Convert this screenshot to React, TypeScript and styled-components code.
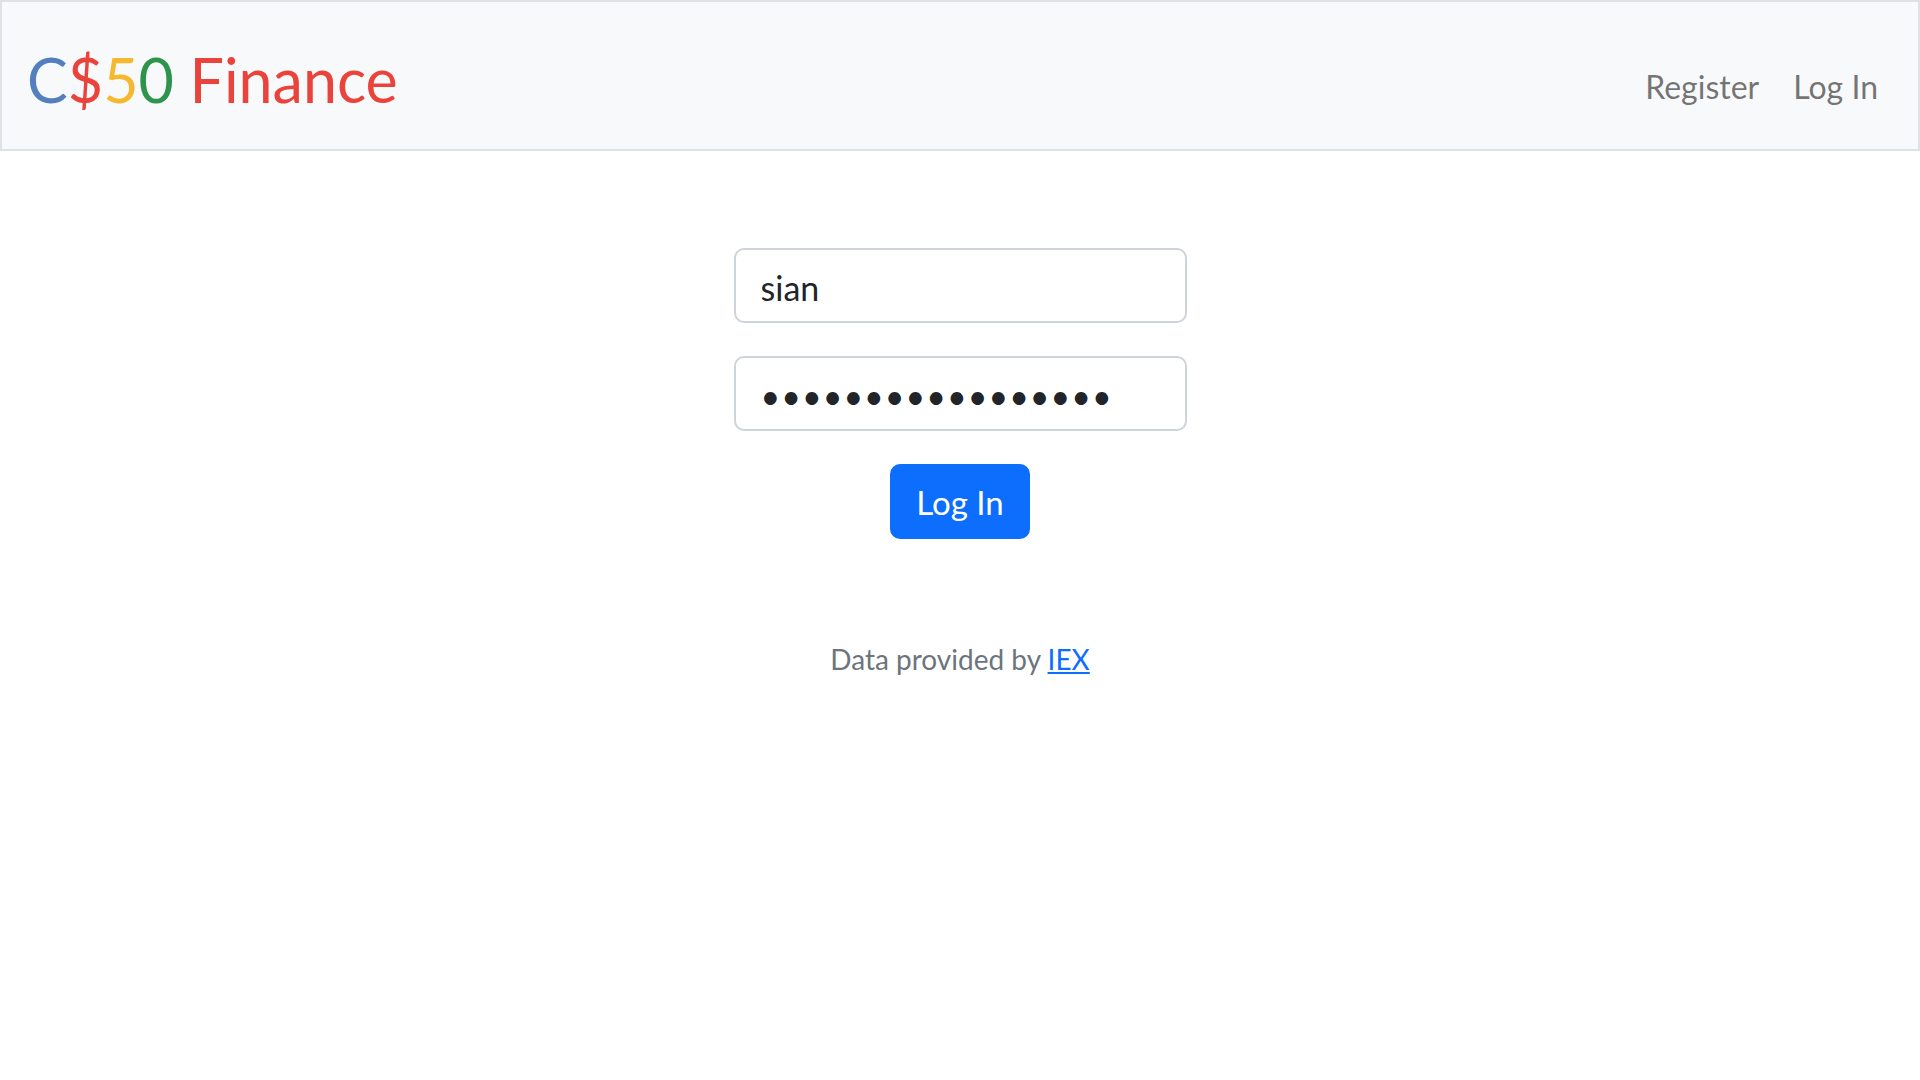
import React from "react";
import styled, { createGlobalStyle } from "styled-components";

const GlobalStyle = createGlobalStyle`
  html, body {
    margin: 0;
    padding: 0;
    background: #ffffff;
    font-family: Lato, "Noto Sans", sans-serif;
    color: #212529;
  }
  * { box-sizing: border-box; }
`;

const Navbar = styled.nav`
  height: 151px;
  border: 2px solid #dee2e6;
  background: #f8f9fa;
  display: flex;
  align-items: center;
  justify-content: space-between;
  padding: 0 40px 0 25px;
`;

const Brand = styled.a`
  font-size: 61px;
  line-height: 1;
  text-decoration: none;
  margin-top: 8px;
  white-space: nowrap;
`;

const BrandPart = styled.span<{ $color: string }>`
  color: ${(p) => p.$color};
`;

const NavList = styled.ul`
  list-style: none;
  margin: 22px 0 0 0;
  padding: 0;
  display: flex;
  gap: 34px;
`;

const NavLink = styled.a`
  font-size: 32px;
  color: rgba(0, 0, 0, 0.55);
  text-decoration: none;
`;

const Main = styled.main`
  display: flex;
  flex-direction: column;
  align-items: center;
  padding-top: 97px;
`;

const Form = styled.form`
  display: flex;
  flex-direction: column;
  align-items: center;
  gap: 33px;
`;

const Input = styled.input<{ $spacing?: number }>`
  width: 453px;
  height: 75px;
  border: 2px solid #ced4da;
  border-radius: 10px;
  padding: 4px 25px 0;
  font-family: Lato, sans-serif;
  font-size: 34px;
  letter-spacing: ${(p) => p.$spacing ?? 0}px;
  color: #212529;
  background: #fff;
  outline: none;
`;

const Button = styled.button`
  width: 140px;
  height: 75px;
  border: none;
  border-radius: 10px;
  background: #0d6efd;
  color: #fff;
  font-family: Lato, sans-serif;
  font-size: 33px;
  padding: 0;
  cursor: pointer;
`;

const Footer = styled.footer`
  margin-top: 103px;
  font-size: 28px;
  color: #6c757d;
  text-align: center;
`;

const Link = styled.a`
  color: #0d6efd;
  text-decoration: underline;
`;

export default function App() {
  return (
    <>
      <GlobalStyle />
      <Navbar>
        <Brand href="#">
          <BrandPart $color="#537fbe">C</BrandPart>
          <BrandPart $color="#ea433b">$</BrandPart>
          <BrandPart $color="#f5b82e">5</BrandPart>
          <BrandPart $color="#2e944b">0</BrandPart>{" "}
          <BrandPart $color="#ea433b">Finance</BrandPart>
        </Brand>
        <NavList>
          <li><NavLink href="#">Register</NavLink></li>
          <li><NavLink href="#">Log In</NavLink></li>
        </NavList>
      </Navbar>
      <Main>
        <Form onSubmit={(e) => e.preventDefault()}>
          <Input type="text" name="username" defaultValue="sian" autoComplete="off" />
          <Input type="password" name="password" defaultValue="sianpassword12345" $spacing={1} />
          <Button type="submit">Log In</Button>
        </Form>
        <Footer>
          Data provided by <Link href="#">IEX</Link>
        </Footer>
      </Main>
    </>
  );
}
